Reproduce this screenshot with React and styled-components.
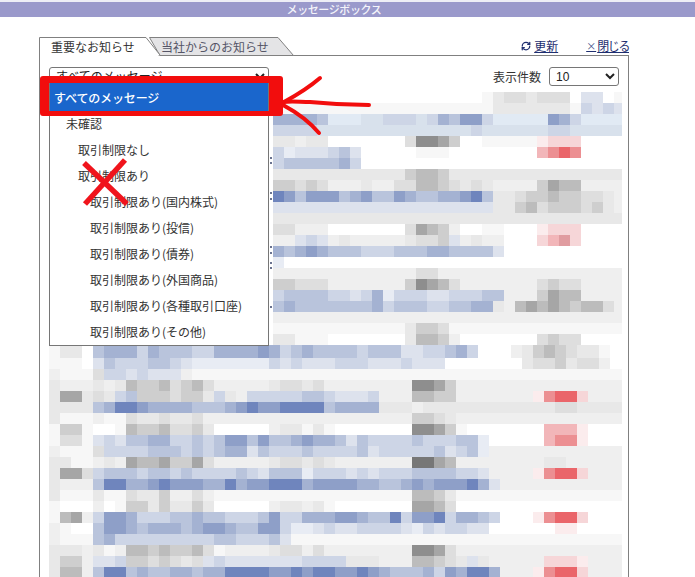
import React from 'react';
import styled, { createGlobalStyle } from 'styled-components';
import { RefreshCw } from 'lucide-react';

const GlobalStyle = createGlobalStyle`
    html, body {
        margin: 0;
        height: 577px;
        overflow: hidden;
        background: #fff;
        font-family: "Noto Sans CJK JP", "Liberation Sans", sans-serif;
        color: #333;
    }
`
const Page = styled.div`
    width: 695px;
    height: 577px;
    position: relative;
    overflow: hidden;
    display: flex;
    flex-direction: column;
`
const TitleBar = styled.div`
    height: 15px;
    flex: none;
    border-top: 2px solid #eeeef6;
    background: #9a99cb;
    color: #f4f4fa;
    font-size: 11px;
    font-weight: 500;
    line-height: 15px;
    letter-spacing: -0.4px;
    text-align: center;
    padding-right: 27px;
`
const Main = styled.div`
    width: 590px;
    margin: 20px 0 0 39px;
`
const TabRow = styled.div`
    display: flex;
    justify-content: space-between;
    align-items: flex-start;
    height: 18px;
`
const Tabs = styled.div`
    display: flex;
`
const Tab = styled.div`
    position: relative;
    z-index: ${p => (p.$active ? 2 : 1)};
    width: ${p => p.$width}px;
    height: 19px;
    margin-left: ${p => p.$offset}px;
    padding-left: ${p => p.$pad}px;
    box-sizing: border-box;
    font-size: 12px;
    line-height: 20px;
    white-space: nowrap;
    color: ${p => (p.$active ? '#333' : '#556')};
`
const TabShape = styled.svg`
    position: absolute;
    left: 0;
    top: 0;
    z-index: -1;
`
const Links = styled.div`
    display: flex;
    gap: 28px;
    font-size: 12px;
    line-height: 15px;
    margin-top: 1px;
`
const PanelLink = styled.a`
    display: flex;
    align-items: center;
    gap: ${p => p.$gap}px;
    color: #1f2f70;
    letter-spacing: ${p => p.$tight || 0}px;
    text-decoration: underline;
`
const CloseMark = styled.span`
    font-size: 10px;
    letter-spacing: 0;
    text-decoration: none;
    color: #44528a;
`
const Panel = styled.div`
    position: relative;
    border: 1px solid #808080;
    border-bottom: none;
    padding: 11px 6px 0 9px;
    height: 600px;
    box-sizing: border-box;
`
const FilterRow = styled.div`
    display: flex;
    justify-content: space-between;
    align-items: flex-start;
    height: 25px;
`
const BaseSelect = styled.select`
    font-family: "Liberation Sans", "Noto Sans CJK JP", sans-serif;
    font-size: 12px;
    height: ${p => p.$height}px;
    width: ${p => p.$width}px;
    padding: 0 2px;
    background: #fff;
    color: #222;
    border: 1px solid #767676;
    border-radius: 3px;
    box-sizing: border-box;
`
const CountBox = styled.div`
    display: flex;
    align-items: center;
    gap: 8px;
    font-size: 12px;
    margin-right: 3px;
`
const Dropdown = styled.div`
    position: absolute;
    left: 9px;
    top: 27px;
    width: 220px;
    box-sizing: border-box;
    border: 1px solid #767676;
    border-top: none;
    background: #fff;
    z-index: 3;
`
const Option = styled.div`
    height: ${p => (p.$selected ? 28 : 26)}px;
    line-height: ${p => (p.$selected ? 30 : 26)}px;
    padding-left: ${p => 4 + p.$level * 12}px;
    font-size: 12px;
    letter-spacing: ${p => (p.$selected ? '-0.15px' : '0')};
    font-weight: ${p => (p.$selected ? 500 : 400)};
    color: ${p => (p.$selected ? '#fff' : '#333')};
    background: ${p => (p.$selected ? '#1a66cc' : '#fff')};
    white-space: nowrap;
`
const MosaicSvg = styled.svg`
    display: block;
`
const Annotation = styled.svg`
    position: absolute;
    left: 0;
    top: 0;
    z-index: 5;
    pointer-events: none;
`

const COLORS = {
    '.': '#ffffff', ',': '#f7f7f7', '-': '#efefef', '_': '#e8e8e8', '~': '#dedede',
    g: '#cecece', h: '#bcbcbc', i: '#a6a6a6', j: '#8e8e8e', k: '#777777',
    a: '#e8ecf4', b: '#dde2ed', c: '#cdd5e6', d: '#b9c4dc', e: '#a4b2d2', f: '#8e9fc8', m: '#6f85bd',
    q: '#e1eaf4', r: '#d8e1ec',
    1: '#fbeced', 2: '#f6d6d8', 3: '#f2b6b9', 4: '#ec8f92', 5: '#ea656a', 6: '#e09ca0',
};

// blurred message rows: [background, [first column, colours], ...]
const UPPER_ROWS = [
    ['.', [19, ',_~~_~~~.bb.,']],
    [',', [20, '_______,cbcb']],
    ['q', [0, 'eeeed'], [8, 'rrcccrce'], [16, 'dffc'], [25, 'fec']],
    ['r', [0, 'cccc'], [18, 'c'], [25, 'cc']],
    ['.', [0, '__-__'], [12, '~jjig'], [19, ',,,,,'], [24, '1222']],
    ['.', [0, 'cabbbcdb'], [13, ',,,'], [24, '3454']],
    ['.', [0, 'cdddddec']],
    ['_', [12, 'ghhg']],
    ['-', [0, 'gg~g~'], [8, '_'], [11, '~~hhg~_~_'], [24, 'gihh']],
    ['_', [0, 'mfdfffdefddfeddeefmd'], [22, '~gghgg~~_-']],
    ['_', [0, 'bbbbbbbbbbbbbbbbbbbb'], [22, 'gh~ggg~g_-']],
    ['_'],
    ['.', [0, '~~---'], [12, '~ihg-'], [19, ',,'], [24, '1222']],
    ['.', [0, '--bcb-_-----_~~gb-_--'], [24, '2362']],
    ['.', [0, 'edefedddcccdddeedddd'], [20, 'b']],
    ['.', [0, 'a']],
    ['-', [13, '~~']],
    ['-', [0, 'gg~~~'], [12, 'gjih~'], [24, '~g~~']],
    ['-', [0, 'cdddd'], [5, 'ccbceaccc'], [14, 'bbcccdd'], [24, 'gihh']],
    ['-', [0, 'dedddddddecdddcc'], [16, 'ddee_'], [22, 'hihihghh~-']],
    ['-'],
    [',', [12, '_gg~']],
    ['.', [0, '__,,,'], [12, '_hhg-'], [24, '~g~~']],
];

const LOWER_ROWS = [
    ['.', [0, ',__.deeecedddcceeeefecdeddddcddd'], [32, 'bbccdec'], [42, '-_ghg~__,']],
    ['.', [0, ',,,.bdcccddcbaaaaaaacbcbbbcccbb'], [31, 'bcbbb'], [43, '_~~g_~~-']],
    [',', [0, '-,,,~ccbcbbb-']],
    ['-', [0, '_---_-_hggh~gh~'], [20, '_~~_~'], [33, 'jjig']],
    ['-', [0, '_ii_~_cdggg~gg_c_-cccccddcbbbc'], [33, 'hhgg'], [44, '14552']],
    ['_', [4, 'demmfeeeeddde'], [17, 'fmffmmmmde'], [27, 'eee'], [45, '_~~'], [33, '-']],
    ['-', [0, '_,,,-,,~__~__~-'], [33, 'gg~_']],
    ['.', [0, ',gg,..,hggh~~g_'], [20, '-__,_,'], [33, 'jjig,'], [45, '3331']],
    ['.', [0, ',~~,bcbddeeccdcdffdfddefeedbdcc'], [31, 'cc'], [33, 'dcccdda'], [45, '3441']],
    ['-', [0, '-,,,~ccccdddcdcdeebdcccdccccdbcc'], [32, 'c'], [33, 'ccdbcda']],
    ['-', [0, '__,,-_-ihhiggi~'], [20, '_~~_~_'], [33, 'kkih'], [45, '__']],
    ['-', [0, '_ii~cdddcddcdccccdcbdddacccbcb'], [30, 'ccc'], [33, 'ddddccb'], [44, '14552']],
    ['-', [0, '_---dmmeefmfffeemeffmmmeffffeedd'], [32, 'e'], [33, 'fefffmeb']],
    [',', [0, '_,,,_,,~__g--~-'], [33, 'hhg_']],
    ['.', [0, ',...-.,gg_g__g_'], [20, '-__-_,'], [33, 'iih~']],
    ['.', [0, ',hi-cffecccddeddcccdfcce'], [24, 'eeffeddmcd'], [33, 'ffmceedc'], [44, '14552']],
    ['.', [0, '-,..dffedeeedeffeddffcaabcbbccccb'], [33, 'acbccbb'], [46, '11']],
    [',', [0, '-,,,decccccccccddccc'], [20, 'db']],
    ['-', [0, '___-_,-hhghggh~,'], [20, '_~~-~-'], [33, 'jji~']],
    ['-', [0, '_gg-bbcgg~g~_~bcbbbbbbbcccc___'], [33, 'hhg~_b_'], [45, '2221']],
    ['-', [0, '_hh-dmmdeddeedeemmmmffmfmmffm'], [29, 'fedd'], [33, 'decfemme'], [44, '14552']],
];

// bits of the message text that stick out right of the open dropdown
const TEXT_SCRAPS = [157, 162, 192, 198, 246, 252, 262, 267, 306];

const CELL = 11;
const UPPER_LEFT = 224;
const LOWER_TOP = 253;

function rowRects(row, y, left, cols, height, key) {
    const [bg, ...runs] = row;
    const rects = [<rect key={key} x={left} y={y} width={cols * CELL} height={height} fill={COLORS[bg]} />];
    runs.forEach(([start, colors], r) => {
        colors.split('').forEach((c, i) => {
            if (start + i >= cols) return;
            rects.push(
                <rect key={`${key}-${r}-${i}`} x={left + (start + i) * CELL} y={y} width={CELL} height={height} fill={COLORS[c]} />
            );
        });
    });
    return rects;
}

function Mosaic() {
    return (
        <MosaicSvg width="573" height="486" viewBox="0 0 573 486" shapeRendering="crispEdges">
            {UPPER_ROWS.map((row, k) => rowRects(row, k * CELL, UPPER_LEFT, 32, CELL, `u${k}`))}
            {LOWER_ROWS.map((row, k) => rowRects(row, k === 0 ? LOWER_TOP : LOWER_TOP + 2 + k * CELL, 0, 53, k === 0 ? 13 : CELL, `l${k}`))}
            {TEXT_SCRAPS.map(y => (
                <rect key={y} x={221} y={y - 92} width={2} height={2} fill="#6a7390" />
            ))}
        </MosaicSvg>
    );
}

function TabOutline({ width, active }) {
    const h = 19;
    const slant = active ? 15 : 16;
    return (
        <TabShape width={width} height={h} viewBox={`0 0 ${width} ${h}`}>
            {active ? (
                <path d={`M0.5 ${h} V0.5 H${width - slant} L${width - 1} 18 V${h} H0.5 Z`} fill="#fff" stroke="#808080" strokeWidth="1" strokeDasharray={`${h + width - slant + 24} 400`} />
            ) : (
                <path d={`M0.5 0.5 H${width - slant} L${width - 0.5} 18.5 H11 Z`} fill="#e4e4e6" stroke="#808080" strokeWidth="1" />
            )}
        </TabShape>
    );
}

const OPTIONS = [
    ['未確認', 1],
    ['取引制限なし', 2],
    ['取引制限あり', 2],
    ['取引制限あり(国内株式)', 3],
    ['取引制限あり(投信)', 3],
    ['取引制限あり(債券)', 3],
    ['取引制限あり(外国商品)', 3],
    ['取引制限あり(各種取引口座)', 3],
    ['取引制限あり(その他)', 3],
];

class App extends React.Component {
    render() {
        return (
            <Page>
                <GlobalStyle />
                <TitleBar>メッセージボックス</TitleBar>
                <Main>
                    <TabRow>
                        <Tabs>
                            <Tab $active $width={122} $offset={0} $pad={12}>
                                <TabOutline width={122} active />
                                重要なお知らせ
                            </Tab>
                            <Tab $width={145} $offset={-12} $pad={12}>
                                <TabOutline width={145} />
                                当社からのお知らせ
                            </Tab>
                        </Tabs>
                        <Links>
                            <PanelLink $gap={3}><RefreshCw size={10} strokeWidth={3} />更新</PanelLink>
                            <PanelLink $gap={1} $tight={-1.4}><CloseMark>×</CloseMark>閉じる</PanelLink>
                        </Links>
                    </TabRow>
                    <Panel>
                        <FilterRow>
                            <BaseSelect $width={220} $height={19}>
                                <option>すべてのメッセージ</option>
                            </BaseSelect>
                            <CountBox>
                                表示件数
                                <BaseSelect $width={70} $height={19} defaultValue="10">
                                    <option>10</option>
                                    <option>20</option>
                                    <option>50</option>
                                </BaseSelect>
                            </CountBox>
                        </FilterRow>
                        <Mosaic />
                        <Dropdown>
                            <Option $selected $level={0}>すべてのメッセージ</Option>
                            {OPTIONS.map(([label, level]) => (
                                <Option key={label} $level={level}>{label}</Option>
                            ))}
                        </Dropdown>
                    </Panel>
                </Main>
                <Annotation width="695" height="577" viewBox="0 0 695 577">
                    <path fillRule="evenodd" fill="#f20d0d" d="M43 76 H280 Q283 76 283 79 V113 Q283 116 280 116 H43 Q40 116 40 113 V79 Q40 76 43 76 Z M49 83 V111 H269 V83 Z" />
                    <g fill="none" stroke="#f20d0d" strokeWidth="4" strokeLinecap="round" strokeLinejoin="round">
                        <path d="M283 102 C292 101 300 102 310 102 C330 104 350 105 369 105" />
                        <path d="M284 102 C295 96 306 90 320 78" />
                        <path d="M283 105 C296 112 308 120 319 133" />
                    </g>
                    <g fill="none" stroke="#f0141c" strokeWidth="5.5">
                        <path d="M84 163 L127 204" />
                        <path d="M125 160 L85 204" />
                    </g>
                </Annotation>
            </Page>
        );
    }
}
export default App;
